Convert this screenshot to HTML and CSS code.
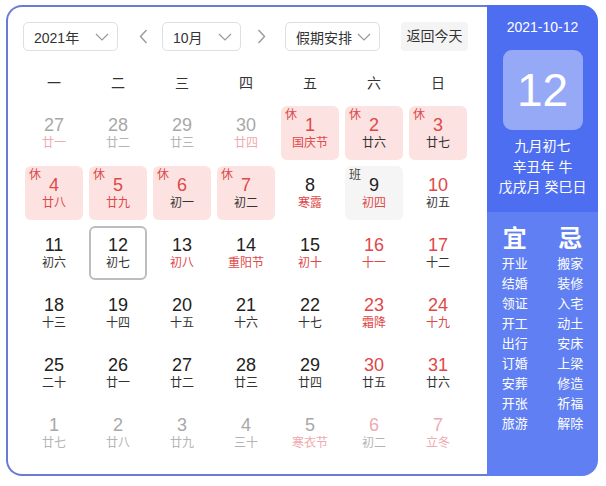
FILE: index.html
```html
<!DOCTYPE html>
<html lang="zh">
<head>
<meta charset="utf-8">
<link rel="stylesheet" href="styles.css">
</head>
<body>
<div class="calendar">
  <div class="main">
    <div class="toolbar">
      <div class="select sel-year"><span>2021年</span><svg class="chev" width="14" height="8" viewBox="0 0 14 8"><polyline points="1,1 7,7 13,1"/></svg></div>
      <div class="arrow"><svg width="9" height="15" viewBox="0 0 9 15"><polyline points="7.5,1 1.5,7.5 7.5,14"/></svg></div>
      <div class="select sel-month"><span>10月</span><svg class="chev" width="14" height="8" viewBox="0 0 14 8"><polyline points="1,1 7,7 13,1"/></svg></div>
      <div class="arrow"><svg width="9" height="15" viewBox="0 0 9 15"><polyline points="1.5,1 7.5,7.5 1.5,14"/></svg></div>
      <div class="select sel-holiday"><span>假期安排</span><svg class="chev" width="14" height="8" viewBox="0 0 14 8"><polyline points="1,1 7,7 13,1"/></svg></div>
      <div class="today-btn">返回今天</div>
    </div>
    <div class="weekdays">
      <span>一</span><span>二</span><span>三</span><span>四</span><span>五</span><span>六</span><span>日</span>
    </div>
    <div class="grid">
      <div class="cell other"><b>27</b><i class="pink">廿一</i></div>
      <div class="cell other"><b>28</b><i>廿二</i></div>
      <div class="cell other"><b>29</b><i>廿三</i></div>
      <div class="cell other"><b>30</b><i class="pink">廿四</i></div>
      <div class="cell rest"><em>休</em><b class="red">1</b><i class="red">国庆节</i></div>
      <div class="cell rest"><em>休</em><b class="red">2</b><i>廿六</i></div>
      <div class="cell rest"><em>休</em><b class="red">3</b><i>廿七</i></div>

      <div class="cell rest"><em>休</em><b class="red">4</b><i class="red">廿八</i></div>
      <div class="cell rest"><em>休</em><b class="red">5</b><i class="red">廿九</i></div>
      <div class="cell rest"><em>休</em><b class="red">6</b><i>初一</i></div>
      <div class="cell rest"><em>休</em><b class="red">7</b><i>初二</i></div>
      <div class="cell"><b>8</b><i class="red">寒露</i></div>
      <div class="cell work"><em>班</em><b>9</b><i class="red">初四</i></div>
      <div class="cell"><b class="red">10</b><i>初五</i></div>

      <div class="cell"><b>11</b><i>初六</i></div>
      <div class="cell today"><b>12</b><i>初七</i></div>
      <div class="cell"><b>13</b><i class="red">初八</i></div>
      <div class="cell"><b>14</b><i class="red">重阳节</i></div>
      <div class="cell"><b>15</b><i class="red">初十</i></div>
      <div class="cell"><b class="red">16</b><i class="red">十一</i></div>
      <div class="cell"><b class="red">17</b><i>十二</i></div>

      <div class="cell"><b>18</b><i>十三</i></div>
      <div class="cell"><b>19</b><i>十四</i></div>
      <div class="cell"><b>20</b><i>十五</i></div>
      <div class="cell"><b>21</b><i>十六</i></div>
      <div class="cell"><b>22</b><i>十七</i></div>
      <div class="cell"><b class="red">23</b><i class="red">霜降</i></div>
      <div class="cell"><b class="red">24</b><i class="red">十九</i></div>

      <div class="cell"><b>25</b><i>二十</i></div>
      <div class="cell"><b>26</b><i>廿一</i></div>
      <div class="cell"><b>27</b><i>廿二</i></div>
      <div class="cell"><b>28</b><i>廿三</i></div>
      <div class="cell"><b>29</b><i>廿四</i></div>
      <div class="cell"><b class="red">30</b><i>廿五</i></div>
      <div class="cell"><b class="red">31</b><i>廿六</i></div>

      <div class="cell other"><b>1</b><i>廿七</i></div>
      <div class="cell other"><b>2</b><i>廿八</i></div>
      <div class="cell other"><b>3</b><i>廿九</i></div>
      <div class="cell other"><b>4</b><i>三十</i></div>
      <div class="cell other"><b>5</b><i class="pink">寒衣节</i></div>
      <div class="cell other"><b class="pink">6</b><i>初二</i></div>
      <div class="cell other"><b class="pink">7</b><i class="pink">立冬</i></div>
    </div>
  </div>
  <div class="panel">
    <div class="panel-top">
      <div class="full-date">2021-10-12</div>
      <div class="big-day">12</div>
      <div class="lunar-line">九月初七</div>
      <div class="lunar-line">辛丑年 牛</div>
      <div class="lunar-line">戊戌月 癸巳日</div>
    </div>
    <div class="panel-bottom">
      <div class="yiji">
        <div class="col">
          <div class="head">宜</div>
          <div>开业</div><div>结婚</div><div>领证</div><div>开工</div><div>出行</div><div>订婚</div><div>安葬</div><div>开张</div><div>旅游</div>
        </div>
        <div class="col">
          <div class="head">忌</div>
          <div>搬家</div><div>装修</div><div>入宅</div><div>动土</div><div>安床</div><div>上梁</div><div>修造</div><div>祈福</div><div>解除</div>
        </div>
      </div>
    </div>
  </div>
</div>
</body>
</html>
```
FILE: styles.css
```css
* { box-sizing: border-box; }
body {
  margin: 0;
  background: #fff;
  font-family: "Liberation Sans", "Noto Sans CJK SC", sans-serif;
  color: #333;
}
.calendar {
  display: flex;
  margin: 5px 0 0 6px;
  width: 592px;
  height: 471px;
}
.main {
  width: 481px;
  height: 471px;
  border: 2px solid #6a7bd3;
  border-right: 0;
  border-radius: 16px 0 0 16px;
  padding: 15px 0 0 14px;
}
.toolbar {
  display: flex;
  align-items: center;
  height: 29px;
  padding-left: 1px;
}
.select {
  height: 29px;
  border: 1px solid #dcdfe6;
  border-radius: 5px;
  display: flex;
  align-items: center;
  justify-content: space-between;
  padding: 0 8px 0 10px;
  font-size: 14px;
  color: #333;
}
.sel-year { width: 95px; }
.sel-month { width: 79px; }
.sel-holiday { width: 95px; margin-left: 11px; }
.chev polyline {
  fill: none;
  stroke: #999;
  stroke-width: 1.2;
}
.arrow {
  width: 26px;
  margin: 0 6px 0 12px;
  display: flex;
  justify-content: center;
  align-items: center;
}
.sel-month + .arrow { margin: 0 0 0 7px; }
.arrow polyline {
  fill: none;
  stroke: #999;
  stroke-width: 1.4;
}
.today-btn {
  margin-left: 21px;
  width: 67px;
  height: 29px;
  line-height: 29px;
  text-align: center;
  background: #f4f4f5;
  border-radius: 4px;
  font-size: 14px;
  color: #333;
}
.weekdays {
  display: grid;
  grid-template-columns: repeat(7, 64px);
  margin-top: 12px;
  height: 40px;
  line-height: 40px;
  text-align: center;
  font-size: 14px;
  color: #333;
}
.grid {
  display: grid;
  grid-template-columns: repeat(7, 58px);
  grid-auto-rows: 54px;
  gap: 6px;
  padding: 3px;
}
.cell {
  position: relative;
  display: flex;
  flex-direction: column;
  align-items: center;
  padding-top: 9px;
  border-radius: 6px;
}
.cell b {
  font-weight: normal;
  font-size: 18px;
  line-height: 20px;
  color: #222;
}
.cell i {
  font-style: normal;
  font-size: 12px;
  line-height: 16px;
  color: #333;
}
.cell em {
  position: absolute;
  left: 4px;
  top: 1px;
  font-style: normal;
  font-size: 12px;
  line-height: 16px;
}
.cell .red { color: #e04848; }
.rest { background: #fde2e2; }
.rest em { color: #e04848; }
.work { background: #f5f5f5; }
.work em { color: #444; }
.today {
  border: 2px solid #bdbdbd;
  padding-top: 7px;
}
.cell.other b { color: #a8a8a8; }
.cell.other i { color: #b4b4b4; }
.cell.other .pink { color: #efaab0; }
.panel {
  width: 111px;
  height: 471px;
  border-radius: 0 16px 16px 0;
  overflow: hidden;
  display: flex;
  flex-direction: column;
  color: #fff;
}
.panel-top {
  background: #4e6ef2;
  padding: 14px 0 14px;
  display: flex;
  flex-direction: column;
  align-items: center;
}
.full-date {
  font-size: 14px;
  line-height: 16px;
}
.big-day {
  margin-top: 15px;
  width: 80px;
  height: 80px;
  border-radius: 9px;
  background: #96a9f7;
  font-size: 46px;
  line-height: 80px;
  text-align: center;
  margin-bottom: 6px;
}
.lunar-line {
  font-size: 14px;
  line-height: 20.5px;
}
.panel-bottom {
  flex: 1;
  background: #607ff2;
  padding-top: 12px;
}
.yiji {
  display: grid;
  grid-template-columns: 1fr 1fr;
  text-align: center;
}
.col div {
  font-size: 13px;
  line-height: 20px;
}
.col .head {
  font-size: 24px;
  font-weight: bold;
  line-height: 30px;
}
```
